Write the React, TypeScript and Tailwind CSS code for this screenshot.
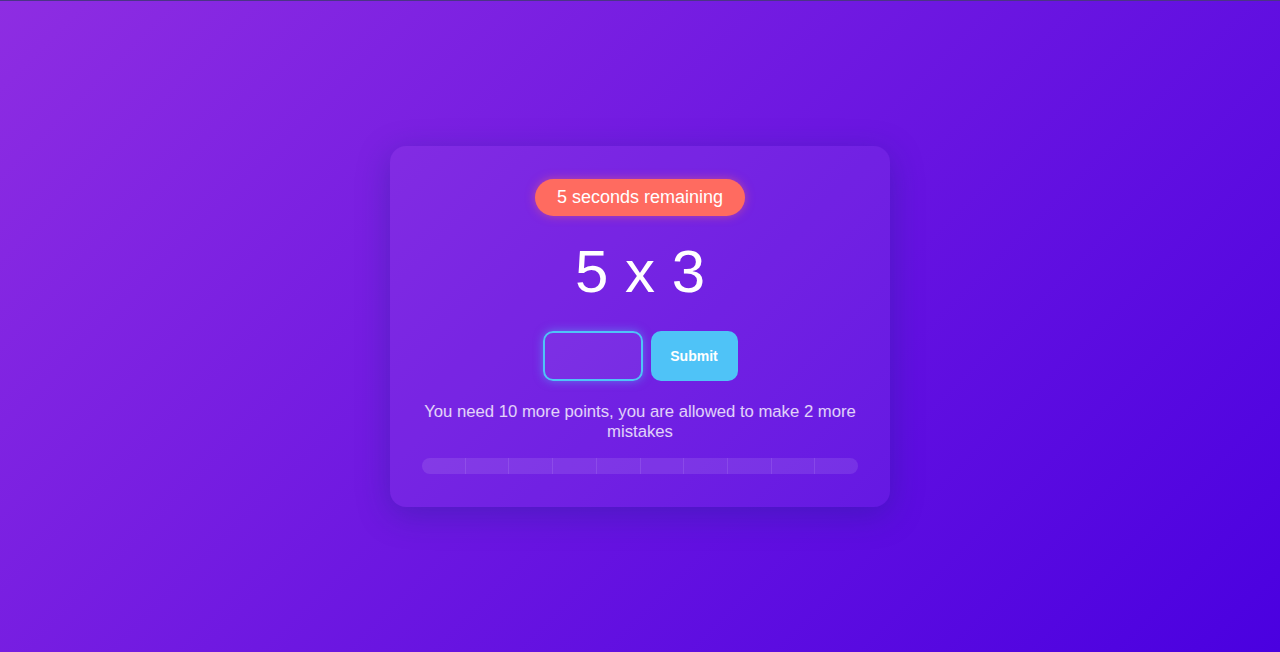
const segments = Array.from({ length: 10 });

export default function App() {
  return (
    <div className="min-h-screen flex items-center justify-center border-t border-[#4b3486] bg-[linear-gradient(135deg,#8e2de2_0%,#4a00e0_100%)] font-['Liberation_Sans',Arial,sans-serif]">
      <div className="w-[500px] rounded-2xl bg-white/5 px-8 py-[33px] shadow-[0_8px_32px_rgba(31,38,135,0.37)] flex flex-col items-center">
        <div className="rounded-full bg-[#ff6b60] px-[22px] py-[7px] text-lg leading-[23px] text-white shadow-[0_0_10px_rgba(255,107,96,0.5)]">
          5 seconds remaining
        </div>
        <div className="mt-[21px] text-[60px] leading-[69px] text-white">5 x 3</div>
        <div className="mt-[25px] flex gap-2">
          <input
            type="text"
            className="h-[50px] w-[100px] rounded-[10px] border-2 border-[#4fc3f7] bg-white/5 text-center text-xl text-white outline-none shadow-[0_0_10px_rgba(79,195,247,0.5)]"
          />
          <button className="h-[50px] w-[87px] rounded-[10px] bg-[#4fc3f7] text-sm font-bold text-white">
            Submit
          </button>
        </div>
        <p className="mt-[21px] text-center text-[16.7px] leading-[20px] text-white/80">
          You need 10 more points, you are allowed to make 2 more mistakes
        </p>
        <div className="mt-4 flex h-4 w-full overflow-hidden rounded-full bg-white/10">
          {segments.map((_, i) => (
            <div key={i} className="flex-1 border-r border-white/10 last:border-r-0" />
          ))}
        </div>
      </div>
    </div>
  );
}
